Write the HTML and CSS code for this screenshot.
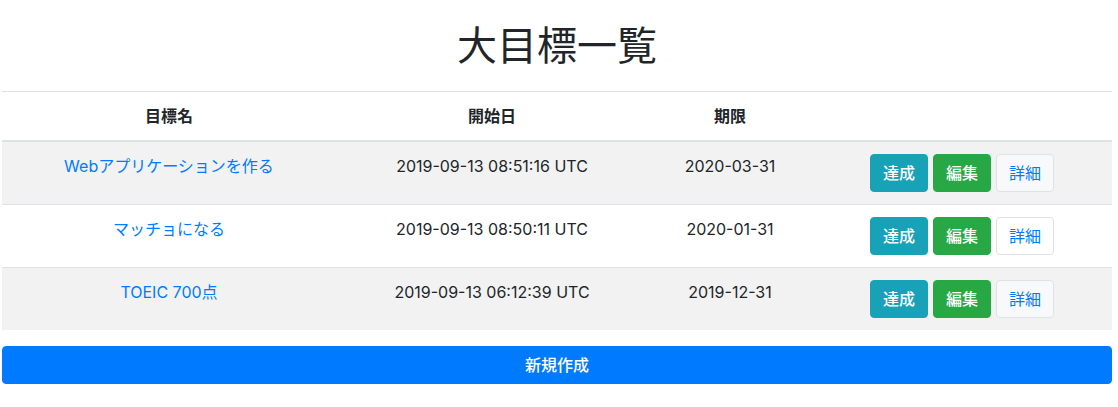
FILE: index.html
```html
<!DOCTYPE html>
<html lang="ja">
<head>
<meta charset="utf-8">
<title>大目標一覧</title>
<link rel="stylesheet" href="styles.css">
</head>
<body>
<div class="page">
  <h1 class="title">大目標一覧</h1>
  <table class="goals">
    <colgroup>
      <col class="c-name"><col class="c-start"><col class="c-due"><col class="c-act">
    </colgroup>
    <thead>
      <tr><th>目標名</th><th>開始日</th><th>期限</th><th></th></tr>
    </thead>
    <tbody>
      <tr>
        <td><a href="#" class="link">Webアプリケーションを作る</a></td>
        <td>2019-09-13 08:51:16 UTC</td>
        <td>2020-03-31</td>
        <td><div class="actions"><a href="#" class="btn btn-info">達成</a><a href="#" class="btn btn-success">編集</a><a href="#" class="btn btn-light">詳細</a></div></td>
      </tr>
      <tr>
        <td><a href="#" class="link">マッチョになる</a></td>
        <td>2019-09-13 08:50:11 UTC</td>
        <td>2020-01-31</td>
        <td><div class="actions"><a href="#" class="btn btn-info">達成</a><a href="#" class="btn btn-success">編集</a><a href="#" class="btn btn-light">詳細</a></div></td>
      </tr>
      <tr>
        <td><a href="#" class="link">TOEIC 700点</a></td>
        <td>2019-09-13 06:12:39 UTC</td>
        <td>2019-12-31</td>
        <td><div class="actions"><a href="#" class="btn btn-info">達成</a><a href="#" class="btn btn-success">編集</a><a href="#" class="btn btn-light">詳細</a></div></td>
      </tr>
    </tbody>
  </table>
  <a href="#" class="btn btn-primary btn-block">新規作成</a>
</div>
</body>
</html>
```
FILE: styles.css
```css
* { box-sizing: border-box; }
html, body { margin: 0; padding: 0; background: #fff; }
body {
  font-family: "Inter", "Noto Sans CJK JP", sans-serif;
  font-size: 16px;
  line-height: 1.5;
  color: #212529;
}
.page {
  padding: 19px 6px 0 2px;
}
.title {
  margin: 0 0 24px;
  text-align: center;
  font-size: 40px;
  line-height: 48px;
  font-weight: 400;
  font-family: "Noto Sans CJK JP", sans-serif;
}
.goals {
  width: 100%;
  border-collapse: collapse;
  text-align: center;
  margin-bottom: 16px;
  table-layout: fixed;
}
.c-name { width: 334px; }
.c-start { width: 312px; }
.c-due { width: 164px; }
.c-act { width: 300px; }
.goals th, .goals td {
  padding: 12px;
  vertical-align: top;
  border-top: 1px solid #dee2e6;
}
.goals th {
  font-weight: 700;
  border-bottom: 2px solid #dee2e6;
  vertical-align: bottom;
}
.goals tbody tr:nth-child(odd) { background: #f2f2f2; }
.link { color: #007bff; text-decoration: none; }
.actions {
  display: flex;
  justify-content: center;
  gap: 5px;
}
.btn {
  display: inline-block;
  padding: 6px 12px;
  font-size: 16px;
  line-height: 24px;
  border: 1px solid transparent;
  border-radius: 4px;
  text-decoration: none;
  text-align: center;
  font-weight: 500;
}
.btn-info { background: #17a2b8; border-color: #17a2b8; color: #fff; }
.btn-success { background: #28a745; border-color: #28a745; color: #fff; }
.btn-light { background: #fff; border-color: #dee2e6; color: #007bff; font-weight: 400; }
tbody tr:nth-child(odd) .btn-light { background: #f8f9fa; }
.btn-primary { background: #007bff; border-color: #007bff; color: #fff; }
.btn-block { display: block; width: 100%; }
```
